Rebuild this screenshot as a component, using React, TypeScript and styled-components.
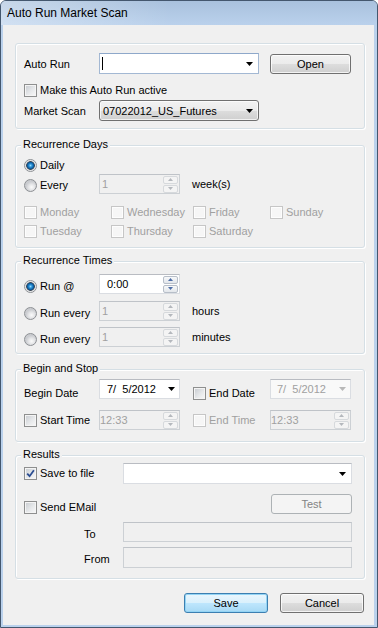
import React from 'react';
import styled, { createGlobalStyle } from 'styled-components';

const GlobalStyle = createGlobalStyle`
  html, body { margin: 0; padding: 0; background: #ffffff; }
  body { font-family: "Liberation Sans", Arial, sans-serif; font-size: 11px; color: #000; }
  * { box-sizing: border-box; }
`;

// ===== window chrome =====
const Window = styled.div`
  width: 378px;
  height: 628px;
  border: 1px solid #44576e;
  border-radius: 6px 6px 0 0;
  background: #bad1ec;
  display: flex;
  flex-direction: column;
  overflow: hidden;
`;

const TitleBar = styled.div`
  height: 24px;
  flex: none;
  display: flex;
  align-items: center;
  padding-left: 6px;
  font-size: 12px;
  background: linear-gradient(90deg, rgba(255, 255, 255, 0.35), rgba(255, 255, 255, 0) 45%),
    linear-gradient(#a9c1dd, #bad1ec);
`;

const Body = styled.div`
  flex: 1;
  margin: 0 3px 2px 2px;
  background: #f0f0f0;
  padding: 18px 9px 0 12px;
  display: flex;
  flex-direction: column;
`;

// ===== group boxes =====
const Group = styled.div<{ $mt?: number; $pt?: number; $pb: number }>`
  margin-top: ${p => p.$mt ?? 0}px;
  padding: ${p => p.$pt ?? 0}px 12px ${p => p.$pb}px 8px;
  border: 1px solid #d5dfe5;
  border-radius: 3px;
  box-shadow: inset 1px 1px 0 #fff, 1px 1px 0 #fff;
  display: flex;
  flex-direction: column;
`;

const Caption = styled.div`
  align-self: flex-start;
  margin: -8px 0 0 -3px;
  padding: 0 2px;
  line-height: 13px;
  background: #f0f0f0;
`;

const Row = styled.div<{ $h: number; $mt?: number }>`
  display: flex;
  align-items: center;
  height: ${p => p.$h}px;
  margin-top: ${p => p.$mt ?? 0}px;
`;

const Cell = styled.div<{ $w?: number; $dy?: number; $pl?: number }>`
  flex: none;
  width: ${p => (p.$w ? `${p.$w}px` : 'auto')};
  display: flex;
  align-items: center;
  padding-top: ${p => (p.$dy ?? 0) * 2}px;
  padding-left: ${p => p.$pl ?? 0}px;
`;

const Label = styled.span<{ $off?: boolean; $ml?: number }>`
  color: ${p => (p.$off ? '#a0a0a0' : '#000')};
  margin-left: ${p => p.$ml ?? 0}px;
  white-space: nowrap;
  line-height: 13px;
`;

// ===== check boxes & radios =====
const Box = styled.span<{ $off?: boolean }>`
  flex: none;
  width: 13px;
  height: 13px;
  margin-right: 3px;
  border: 1px solid ${p => (p.$off ? '#c6c6c6' : '#8e8f8f')};
  background: ${p =>
    p.$off ? '#f6f6f6' : 'linear-gradient(135deg, #c6cacf 0%, #e6e8ea 55%, #f9f9f9 100%)'};
  box-shadow: inset 0 0 0 1px ${p => (p.$off ? '#fdfdfd' : '#f4f4f4')};
  display: flex;
  align-items: center;
  justify-content: center;
`;

const Tick = styled.svg`
  display: block;
`;

const RadioDot = styled.span<{ $on?: boolean }>`
  flex: none;
  width: 13px;
  height: 13px;
  margin-right: 3px;
  border-radius: 50%;
  border: 1px solid #8d9094;
  background: ${p =>
    p.$on
      ? 'radial-gradient(circle at 50% 50%, #8fdcff 0, #2a90d6 1.6px, #0c5a9a 3.2px, #3d4a58 4px, #d9dbde 4.6px, #f5f5f5 5.6px)'
      : 'radial-gradient(circle at 60% 65%, #fbfbfb 0, #e4e5e7 3px, #caccd0 5.6px)'};
`;

const Check: React.FC<{ label: string; off?: boolean; checked?: boolean }> = ({ label, off, checked }) => (
  <>
    <Box $off={off}>
      {checked && (
        <Tick width="9" height="9" viewBox="0 0 9 9">
          <path d="M1.2 4.6 L3.6 7.2 L7.9 1.2" fill="none" stroke="#2b4d92" strokeWidth="1.8" />
        </Tick>
      )}
    </Box>
    <Label $off={off}>{label}</Label>
  </>
);

const Radio: React.FC<{ label: string; on?: boolean }> = ({ label, on }) => (
  <>
    <RadioDot $on={on} />
    <Label>{label}</Label>
  </>
);

// ===== fields =====
type Tone = 'white' | 'focus' | 'off' | 'soft';

const Field = styled.div<{ $w: number; $h?: number; $tone?: Tone; $pl?: number; $pr?: number }>`
  flex: none;
  width: ${p => p.$w}px;
  height: ${p => p.$h ?? 20}px;
  display: flex;
  align-items: center;
  padding: 0 ${p => p.$pr ?? 1}px 0 ${p => p.$pl ?? 2}px;
  background: ${p => (p.$tone === 'off' ? '#f0f0f0' : p.$tone === 'soft' ? '#f9f9f9' : '#fff')};
  border: 1px solid
    ${p => (p.$tone === 'focus' ? '#a3b8d3' : p.$tone === 'off' ? '#ccd0d4' : '#dadde2')};
  border-top-color: ${p =>
    p.$tone === 'focus' ? '#8ea8ca' : p.$tone === 'off' ? '#bfc3c8' : '#b9bcc2'};
  color: ${p => (p.$tone === 'off' || p.$tone === 'soft' ? '#a0a0a0' : '#000')};
  line-height: 13px;
  white-space: nowrap;
`;

const Caret = styled.span`
  width: 1px;
  height: 13px;
  background: #000;
`;

const Arrow = styled.svg`
  flex: none;
  display: block;
  margin-left: auto;
`;

const Drop: React.FC<{ color?: string }> = ({ color = '#000' }) => (
  <Arrow width="7" height="4" viewBox="0 0 7 4">
    <path d="M0 0H7L3.5 4Z" fill={color} />
  </Arrow>
);

const SpinCol = styled.div`
  margin-left: auto;
  display: flex;
  flex-direction: column;
  gap: 1px;
`;

const SpinBtn = styled.div<{ $off?: boolean }>`
  width: 15px;
  height: 8px;
  border: 1px solid ${p => (p.$off ? '#d6d9dc' : '#b7bec8')};
  border-radius: 2px;
  background: ${p => (p.$off ? '#f4f4f4' : 'linear-gradient(#f8f9fa, #e2e6eb)')};
  display: flex;
  align-items: center;
  justify-content: center;
`;

const Spin: React.FC<{ off?: boolean }> = ({ off }) => {
  const c = off ? '#b4b8bd' : '#4f6fa8';
  return (
    <SpinCol>
      <SpinBtn $off={off}>
        <svg width="5" height="3" viewBox="0 0 5 3"><path d="M0 3H5L2.5 0Z" fill={c} /></svg>
      </SpinBtn>
      <SpinBtn $off={off}>
        <svg width="5" height="3" viewBox="0 0 5 3"><path d="M0 0H5L2.5 3Z" fill={c} /></svg>
      </SpinBtn>
    </SpinCol>
  );
};

const Select = styled.div<{ $w: number }>`
  flex: none;
  width: ${p => p.$w}px;
  height: 21px;
  display: flex;
  align-items: center;
  padding: 0 5px 0 3px;
  border: 1px solid #707070;
  border-radius: 3px;
  background: linear-gradient(#f2f2f2 0%, #ebebeb 50%, #dddddd 51%, #cfcfcf 100%);
  box-shadow: inset 0 0 0 1px rgba(255, 255, 255, 0.7);
  white-space: nowrap;
`;

// ===== buttons =====
type Kind = 'normal' | 'primary' | 'off';

const Button = styled.button<{ $w: number; $kind?: Kind; $ml?: number | 'auto' }>`
  flex: none;
  width: ${p => p.$w}px;
  height: 20px;
  margin: 0 0 0 ${p => (p.$ml === 'auto' ? 'auto' : `${p.$ml ?? 0}px`)};
  padding: 0;
  font: 11px "Liberation Sans", Arial, sans-serif;
  border-radius: 3px;
  border: 1px solid
    ${p => (p.$kind === 'primary' ? '#3c7fb1' : p.$kind === 'off' ? '#adb2b5' : '#707070')};
  background: ${p =>
    p.$kind === 'primary'
      ? 'linear-gradient(#eaf6fd 0%, #d9f0fc 50%, #bee6fd 51%, #a7d9f5 100%)'
      : p.$kind === 'off'
      ? '#f4f4f4'
      : 'linear-gradient(#f2f2f2 0%, #ebebeb 50%, #dddddd 51%, #cfcfcf 100%)'};
  box-shadow: inset 0 0 0 1px
    ${p => (p.$kind === 'primary' ? '#94d4f4' : p.$kind === 'off' ? '#f4f4f4' : 'rgba(255,255,255,0.75)')};
  color: ${p => (p.$kind === 'off' ? '#838383' : '#000')};
`;

const Footer = styled.div`
  display: flex;
  justify-content: flex-end;
  gap: 12px;
  margin-top: 14px;
  padding-right: 1px;
`;

export default function App() {
  return (
    <>
      <GlobalStyle />
      <Window>
        <TitleBar>Auto Run Market Scan</TitleBar>
        <Body>
          <Group $pt={9} $pb={7}>
            <Row $h={21}>
              <Cell $w={75} $dy={0.5}><Label>Auto Run</Label></Cell>
              <Field $w={160} $h={21} $tone="focus" $pl={2} $pr={5}>
                <Caret />
                <Drop />
              </Field>
              <Button $w={81} $ml={11}>Open</Button>
            </Row>
            <Row $h={17} $mt={8}>
              <Check label="Make this Auto Run active" />
            </Row>
            <Row $h={21} $mt={1}>
              <Cell $w={75} $dy={0.5}><Label>Market Scan</Label></Cell>
              <Select $w={160}>
                07022012_US_Futures
                <Drop />
              </Select>
            </Row>
          </Group>

          <Group $mt={16} $pb={8}>
            <Caption>Recurrence Days</Caption>
            <Row $h={16} $mt={6}>
              <Radio label="Daily" on />
            </Row>
            <Row $h={20} $mt={1}>
              <Cell $w={75} $dy={1}><Radio label="Every" /></Cell>
              <Field $w={81} $tone="off" $pl={2}>
                1
                <Spin off />
              </Field>
              <Label $ml={12}>week(s)</Label>
            </Row>
            <Row $h={16} $mt={10}>
              <Cell $w={87}><Check label="Monday" off /></Cell>
              <Cell $w={82}><Check label="Wednesday" off /></Cell>
              <Cell $w={77}><Check label="Friday" off /></Cell>
              <Cell><Check label="Sunday" off /></Cell>
            </Row>
            <Row $h={16} $mt={3}>
              <Cell $w={87}><Check label="Tuesday" off /></Cell>
              <Cell $w={82}><Check label="Thursday" off /></Cell>
              <Cell $w={77}><Check label="Saturday" off /></Cell>
            </Row>
          </Group>

          <Group $mt={13} $pb={6}>
            <Caption>Recurrence Times</Caption>
            <Row $h={20} $mt={7}>
              <Cell $w={75} $dy={2.5}><Radio label="Run @" on /></Cell>
              <Field $w={81} $pl={7}>
                0:00
                <Spin />
              </Field>
            </Row>
            <Row $h={20} $mt={7}>
              <Cell $w={75} $dy={2.5}><Radio label="Run every" /></Cell>
              <Field $w={81} $tone="off" $pl={2}>
                1
                <Spin off />
              </Field>
              <Label $ml={12}>hours</Label>
            </Row>
            <Row $h={20} $mt={6}>
              <Cell $w={75} $dy={2.5}><Radio label="Run every" /></Cell>
              <Field $w={81} $tone="off" $pl={2}>
                1
                <Spin off />
              </Field>
              <Label $ml={12}>minutes</Label>
            </Row>
          </Group>

          <Group $mt={15} $pb={11}>
            <Caption>Begin and Stop</Caption>
            <Row $h={20} $mt={4}>
              <Cell $w={75} $dy={4.5}><Label>Begin Date</Label></Cell>
              <Field $w={81} $pl={7} $pr={4}>
                7/&nbsp; 5/2012
                <Drop />
              </Field>
              <Cell $w={90} $dy={4.5} $pl={13}><Check label="End Date" /></Cell>
              <Field $w={81} $tone="soft" $pl={6} $pr={4}>
                7/&nbsp; 5/2012
                <Drop color="#b8b8b8" />
              </Field>
            </Row>
            <Row $h={20} $mt={11}>
              <Cell $w={75}><Check label="Start Time" /></Cell>
              <Field $w={81} $tone="off" $pl={0}>
                12:33
                <Spin off />
              </Field>
              <Cell $w={90} $pl={13}><Check label="End Time" off /></Cell>
              <Field $w={81} $tone="off" $pl={0}>
                12:33
                <Spin off />
              </Field>
            </Row>
          </Group>

          <Group $mt={13} $pb={10}>
            <Caption>Results</Caption>
            <Row $h={21} $mt={2}>
              <Cell $w={99}><Check label="Save to file" checked /></Cell>
              <Field $w={229} $h={21} $pr={5}>
                <Drop />
              </Field>
            </Row>
            <Row $h={20} $mt={10}>
              <Cell $dy={3.5}><Check label="Send EMail" /></Cell>
              <Button $w={81} $kind="off" $ml="auto">Test</Button>
            </Row>
            <Row $h={20} $mt={8}>
              <Cell $w={99} $pl={60} $dy={2}><Label>To</Label></Cell>
              <Field $w={229} $tone="off" />
            </Row>
            <Row $h={21} $mt={5}>
              <Cell $w={99} $pl={60} $dy={1.5}><Label>From</Label></Cell>
              <Field $w={229} $h={21} $tone="off" />
            </Row>
          </Group>

          <Footer>
            <Button $w={84} $kind="primary">Save</Button>
            <Button $w={84}>Cancel</Button>
          </Footer>
        </Body>
      </Window>
    </>
  );
}
